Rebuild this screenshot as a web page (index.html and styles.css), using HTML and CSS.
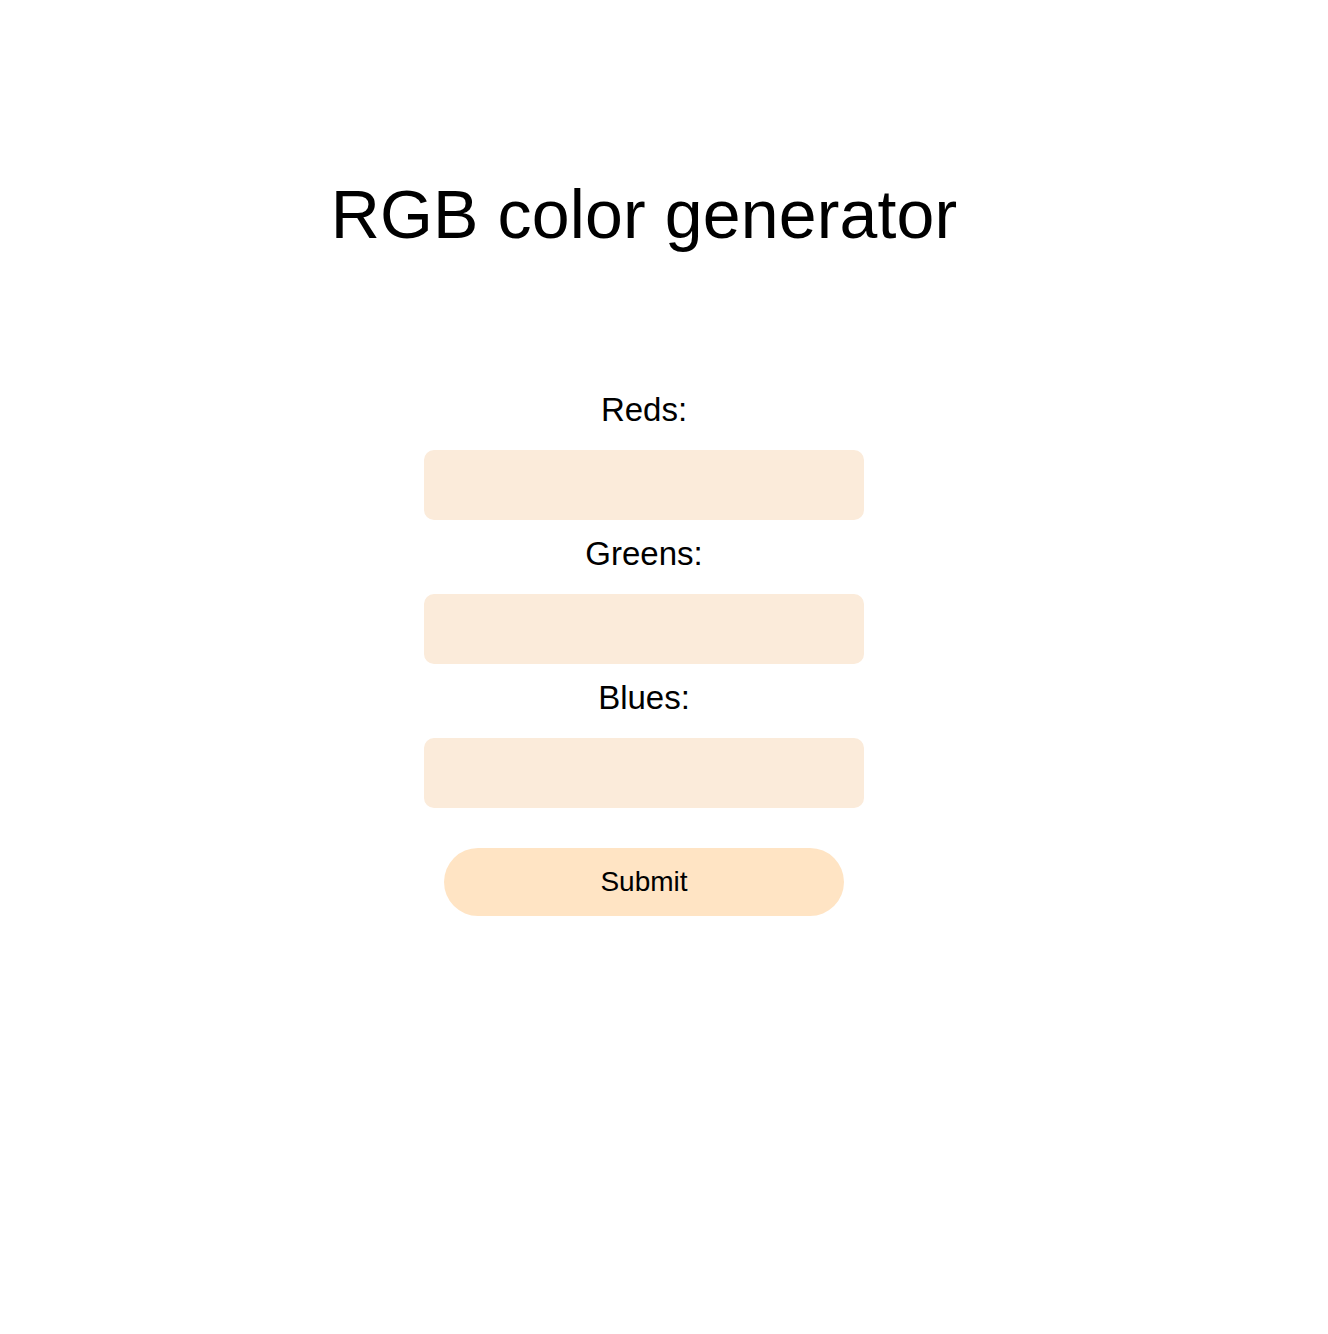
FILE: index.html
```html
<!DOCTYPE html>
<html lang="en">
<head>
<meta charset="utf-8">
<title>RGB color generator</title>
<link rel="stylesheet" href="styles.css">
</head>
<body>
<main class="page">
  <h1 class="title">RGB color generator</h1>
  <form class="rgb-form">
    <label class="field-label" for="reds">Reds:</label>
    <input class="field-input" id="reds" type="text">
    <label class="field-label" for="greens">Greens:</label>
    <input class="field-input" id="greens" type="text">
    <label class="field-label" for="blues">Blues:</label>
    <input class="field-input" id="blues" type="text">
    <button class="submit-btn" type="button">Submit</button>
  </form>
</main>
</body>
</html>
```

FILE: styles.css
```css
html, body {
  margin: 0;
  padding: 0;
  background: #ffffff;
}

body {
  font-family: "Liberation Sans", Arial, sans-serif;
  color: #000000;
}

.page {
  width: 1288px;
  padding-top: 175px;
  display: flex;
  flex-direction: column;
  align-items: center;
}

.title {
  margin: 0 0 138px;
  font-size: 68px;
  line-height: 78px;
  font-weight: 400;
  letter-spacing: 0.15px;
  text-align: center;
}

.rgb-form {
  display: flex;
  flex-direction: column;
  align-items: center;
}

.field-label {
  display: block;
  font-size: 33px;
  line-height: 38px;
  margin: 0 0 21px;
  text-align: center;
}

.field-input {
  box-sizing: border-box;
  width: 440px;
  height: 70px;
  border: none;
  border-radius: 10px;
  background: #fbebda;
  margin: 0 0 15px;
  outline: none;
  font: inherit;
}

.submit-btn {
  box-sizing: border-box;
  width: 400px;
  height: 68px;
  margin-top: 25px;
  border: none;
  border-radius: 34px;
  background: #ffe4c4;
  color: #000000;
  font-family: "Liberation Sans", Arial, sans-serif;
  font-size: 28px;
  cursor: pointer;
}
```
